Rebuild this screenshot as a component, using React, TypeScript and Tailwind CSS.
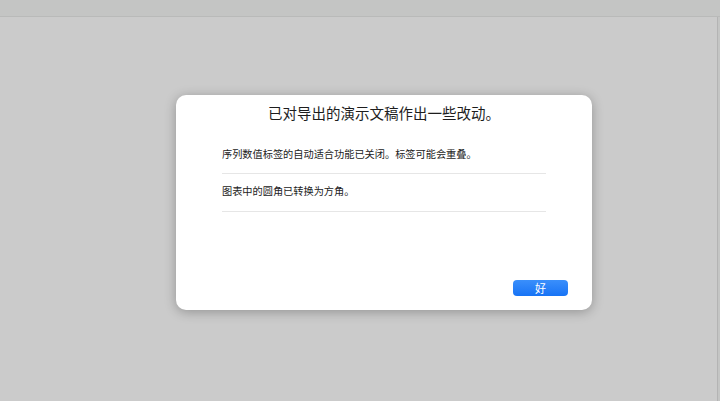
const font = { fontFamily: '"Noto Sans CJK SC", "Noto Sans", sans-serif' };

export default function App() {
  return (
    <div className="w-[720px] h-[401px] bg-[#c4c5c4] flex flex-col overflow-hidden" style={font}>
      {/* toolbar strip */}
      <div className="h-[17px] shrink-0 border-b border-[#b9bab9]" />

      {/* canvas */}
      <div className="flex-1 mr-[2px] bg-[#cbcbcb] border-r border-[#b4b4b4] flex items-start pt-[78px] pl-[176px]">
        <div className="w-[416px] h-[215px] bg-white rounded-[10px] shadow-[0_2px_12px_rgba(0,0,0,0.28)] flex flex-col">
          <h1 className="text-[14.5px] leading-[20px] text-[#1d1d1d] text-center mt-[8px]">
            已对导出的演示文稿作出一些改动。
          </h1>

          <div className="mx-[46px] mt-[13px] text-[10.2px] text-[#222]">
            <div className="h-[38px] pt-[10px] border-b border-[#e6e6e6]">
              序列数值标签的自动适合功能已关闭。标签可能会重叠。
            </div>
            <div className="h-[38px] pt-[9px] border-b border-[#e6e6e6]">
              图表中的圆角已转换为方角。
            </div>
          </div>

          <div className="flex-1" />

          <div className="flex justify-end pr-[24px] pb-[14px]">
            <button className="w-[55px] h-[16px] rounded-[4px] bg-gradient-to-b from-[#3a8ffb] to-[#1673f5] text-white text-[11px] leading-[16px]">
              好
            </button>
          </div>
        </div>
      </div>
    </div>
  );
}
